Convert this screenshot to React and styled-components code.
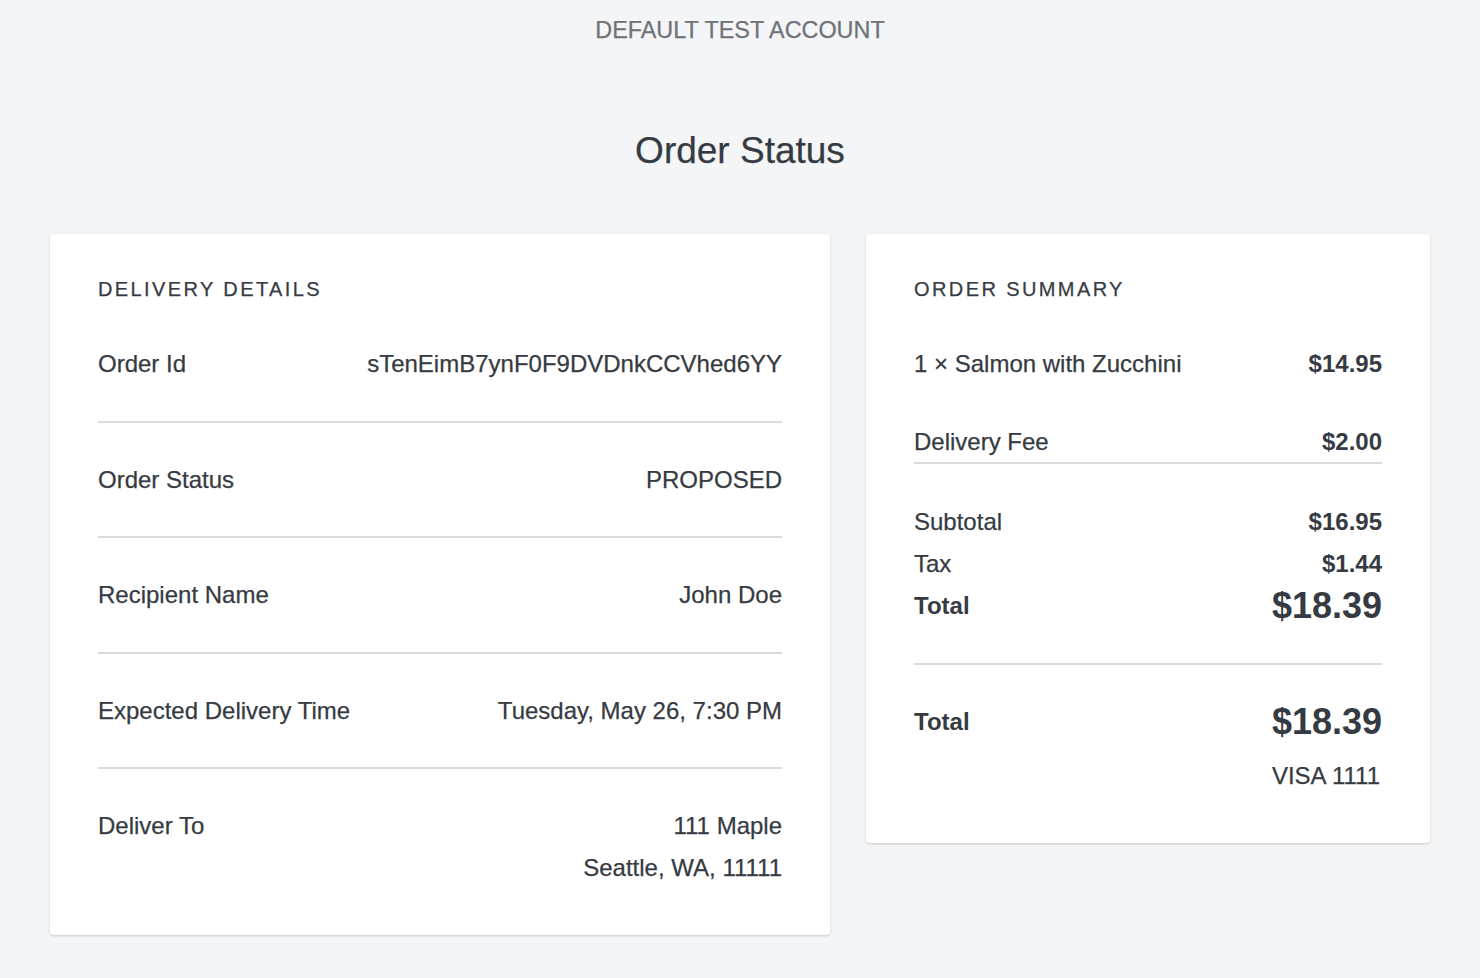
import styled, { createGlobalStyle } from "styled-components";

const GlobalStyle = createGlobalStyle`
  body {
    margin: 0;
    background: #f4f5f7;
    font-family: "Liberation Sans", Arial, sans-serif;
    color: #363b43;
    -webkit-text-stroke: 0.25px currentColor;
  }
`;

const details = [
  { label: "Order Id", value: ["sTenEimB7ynF0F9DVDnkCCVhed6YY"] },
  { label: "Order Status", value: ["PROPOSED"] },
  { label: "Recipient Name", value: ["John Doe"] },
  { label: "Expected Delivery Time", value: ["Tuesday, May 26, 7:30 PM"] },
  { label: "Deliver To", value: ["111 Maple", "Seattle, WA, 11111"] },
];

const items = [
  { label: "1 × Salmon with Zucchini", value: "$14.95" },
  { label: "Delivery Fee", value: "$2.00" },
];

const App = () => {
  return (
    <>
      <GlobalStyle />
      <Page>
        <AccountBar>DEFAULT TEST ACCOUNT</AccountBar>
        <Title>Order Status</Title>
        <Cards>
          <Card $bottom={10}>
            <SectionTitle>DELIVERY DETAILS</SectionTitle>
            {details.map((d, i) => (
              <DetailRow key={d.label} $last={i === details.length - 1}>
                <span>{d.label}</span>
                <DetailValue>
                  {d.value.map((line) => (
                    <div key={line}>{line}</div>
                  ))}
                </DetailValue>
              </DetailRow>
            ))}
          </Card>

          <Card $bottom={52}>
            <SectionTitle>ORDER SUMMARY</SectionTitle>
            <ItemList>
              {items.map((it) => (
                <LineRow key={it.label}>
                  <span>{it.label}</span>
                  <Amount>{it.value}</Amount>
                </LineRow>
              ))}
            </ItemList>
            <Totals>
              <TotalRow>
                <span>Subtotal</span>
                <Amount>$16.95</Amount>
              </TotalRow>
              <TotalRow>
                <span>Tax</span>
                <Amount>$1.44</Amount>
              </TotalRow>
              <TotalRow>
                <Strong>Total</Strong>
                <BigAmount>$18.39</BigAmount>
              </TotalRow>
            </Totals>
            <GrandTotal>
              <TotalRow>
                <Strong>Total</Strong>
                <BigAmount>$18.39</BigAmount>
              </TotalRow>
              <Payment>VISA 1111</Payment>
            </GrandTotal>
          </Card>
        </Cards>
      </Page>
    </>
  );
};

const Page = styled.div`
  display: flex;
  flex-direction: column;
  align-items: center;
  padding: 16px 0 40px;
`;

const AccountBar = styled.div`
  font-size: 23.4px;
  line-height: 28px;
  color: #6f7276;
`;

const Title = styled.h1`
  margin: 85px 0 0;
  font-size: 37px;
  line-height: 44px;
  font-weight: 400;
  color: #363b43;
`;

const Cards = styled.div`
  margin-top: 61px;
  display: grid;
  grid-template-columns: 780px 564px;
  gap: 36px;
  align-items: start;
`;

const Card = styled.div`
  background: #fff;
  border-radius: 4px;
  box-shadow: 0 1px 3px rgba(0, 0, 0, 0.12), 0 1px 2px rgba(0, 0, 0, 0.06);
  padding: 43px 48px ${(p) => p.$bottom}px;
`;

const SectionTitle = styled.h2`
  margin: 0 0 6px;
  font-size: 20px;
  line-height: 24px;
  font-weight: 400;
  letter-spacing: 2.4px;
  color: #363b43;
`;

const DetailRow = styled.div`
  display: flex;
  justify-content: space-between;
  align-items: flex-start;
  padding: 42px 0 41.5px;
  font-size: 24px;
  line-height: 30px;
  border-bottom: ${(p) => (p.$last ? "none" : "2px solid #d9dbde")};
`;

const DetailValue = styled.div`
  display: flex;
  flex-direction: column;
  align-items: flex-end;
  gap: 12px;
`;

const ItemList = styled.div`
  display: flex;
  flex-direction: column;
  gap: 48px;
  padding: 42px 0 5px;
  border-bottom: 2px solid #d9dbde;
`;

const LineRow = styled.div`
  display: flex;
  justify-content: space-between;
  font-size: 24px;
  line-height: 30px;
`;

const Amount = styled.span`
  font-weight: 700;
  -webkit-text-stroke: 0;
`;

const Totals = styled.div`
  padding: 37px 0 36px;
  border-bottom: 2px solid #d9dbde;
`;

const TotalRow = styled.div`
  display: flex;
  justify-content: space-between;
  align-items: center;
  height: 42px;
  font-size: 24px;
`;

const Strong = styled.span`
  font-weight: 700;
  -webkit-text-stroke: 0;
`;

const BigAmount = styled.span`
  font-size: 36px;
  font-weight: 700;
  -webkit-text-stroke: 0;
`;

const GrandTotal = styled.div`
  display: flex;
  flex-direction: column;
  padding-top: 36px;
`;

const Payment = styled.div`
  align-self: flex-end;
  margin-top: 18px;
  padding-right: 2px;
  font-size: 24px;
  line-height: 30px;
`;

export default App;
